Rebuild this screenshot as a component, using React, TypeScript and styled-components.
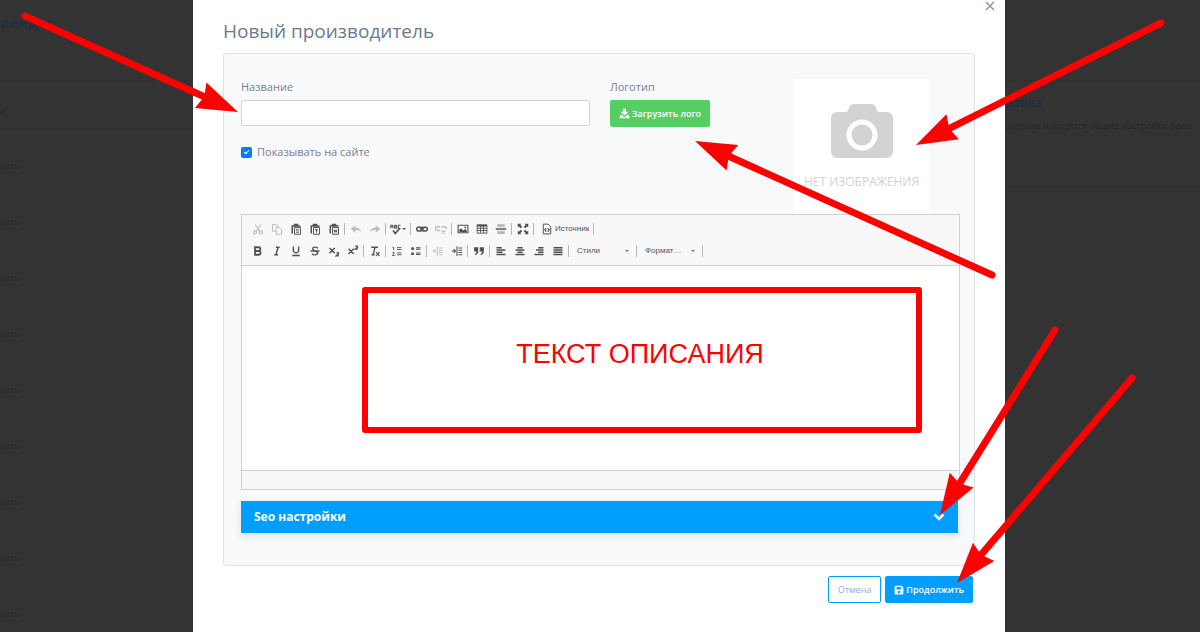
import React from "react";
import styled, { createGlobalStyle, css } from "styled-components";

const Global = createGlobalStyle`
  *, *::before, *::after { box-sizing: border-box; }
  body { margin: 0; background: #333; font-family: "Open Sans", "Noto Sans", sans-serif; font-size: 11px; line-height: 16px; color: #7b7f90; }
  button, input, select { font-family: inherit; margin: 0; }
`;

const Screen = styled.div`
  position: relative;
  display: grid;
  grid-template-columns: minmax(0, 193fr) minmax(0, 812fr) minmax(0, 195fr);
  min-height: 100vh;
  overflow: hidden;
`;

const BackHeading = styled.h2<{ $size: number }>`
  margin: 0;
  font-size: ${(p) => p.$size}px;
  line-height: 20px;
  font-weight: 700;
  color: #202f3c;
`;

const BackList = styled.section`
  padding-top: 12px;
  font-size: 9px;
  color: #272727;
`;

const ListHead = styled.div`
  margin-top: 48px;
  height: 49px;
  padding-top: 24px;
  border-top: 1px solid #303030;
  border-bottom: 1px solid #303030;
  line-height: 14px;
`;

const List = styled.ul`
  margin: 0;
  padding: 0;
  list-style: none;
`;

const ListRow = styled.li`
  height: 56px;
  padding-top: 30px;
  line-height: 14px;
  border-bottom: 1px solid #313131;
`;

const Help = styled.aside`
  align-self: start;
  margin-top: 80px;
  height: 107px;
  padding: 12px 0 0;
  border-top: 1px solid #303030;
  border-bottom: 1px solid #2e2e2e;
  white-space: nowrap;
  p { margin: 6px 0 0; font-size: 9px; line-height: 14px; color: #262626; }
`;

const Dialog = styled.section`
  background: #fff;
  padding: 0 30px 28px;
  display: flex;
  flex-direction: column;
`;

const DialogTop = styled.div`
  display: flex;
  justify-content: flex-end;
  height: 17px;
  margin-right: -20px;
`;

const CloseButton = styled.button`
  display: flex;
  width: 10px;
  height: 11px;
  padding: 1px 0 0;
  border: 0;
  background: none;
  color: #8d98a7;
`;

const Title = styled.h1`
  margin: 0 0 8px;
  font-size: 19px;
  line-height: 28px;
  font-weight: 400;
  color: #6b7a90;
`;

const Panel = styled.div`
  border: 1px solid #dde2e7;
  border-radius: 3px;
  background: #f7f9fb;
  padding: 25px 14px 32px 17px;
`;

const Fields = styled.div`
  display: grid;
  grid-template-columns: minmax(0, 349fr) minmax(0, 164fr) 135px;
  column-gap: 20px;
  padding-right: 31px;
`;

const Label = styled.label`
  display: block;
  line-height: 16px;
  margin-bottom: 5px;
`;

const TextInput = styled.input`
  display: block;
  width: 100%;
  height: 26px;
  padding: 2px 8px;
  border: 1px solid #cfd4da;
  border-radius: 2px;
  background: #fff;
  font-size: 11px;
`;

const CheckLine = styled.label`
  display: flex;
  align-items: center;
  gap: 5px;
  margin-top: 18px;
`;

const Check = styled.input`
  appearance: none;
  width: 11px;
  height: 11px;
  border-radius: 2px;
  background: #007bff;
  display: grid;
  place-items: center;
  &:checked::before {
    content: "";
    width: 5px;
    height: 3px;
    border-left: 1px solid #fff;
    border-bottom: 1px solid #fff;
    transform: translateY(-1px) rotate(-45deg);
  }
`;

const Button = styled.button<{ $kind: "green" | "blue" | "outline" }>`
  display: inline-flex;
  align-items: center;
  justify-content: center;
  gap: 2px;
  height: 27px;
  padding: 0 8px;
  border: 1px solid #009eff;
  border-radius: 2px;
  font-size: 9px;
  font-weight: 600;
  line-height: 14px;
  white-space: nowrap;
  color: #fff;
  background: #009eff;
  ${(p) => p.$kind === "green" && css`background: #55ce63; border-color: #55ce63;`}
  ${(p) => p.$kind === "outline" && css`padding: 0 9px; background: #fff; color: #89aef5; font-weight: 400;`}
`;

const NoImage = styled.figure`
  margin: 0;
  height: 135px;
  background: #fff;
  display: flex;
  flex-direction: column;
  align-items: center;
  padding-top: 25px;
  figcaption { margin-top: 16px; font-size: 12px; line-height: 16px; color: #d3d3d3; white-space: nowrap; }
`;

const Editor = styled.div`
  border: 1px solid #d1d1d1;
  background: #fff;
`;

const Toolbar = styled.div`
  background: #f8f8f8;
  border-bottom: 1px solid #d1d1d1;
  padding: 3px 6px;
`;

const ToolRow = styled.div`
  display: flex;
  align-items: center;
  height: 22px;
`;

const Tool = styled.button<{ $faded?: boolean; $wide?: boolean }>`
  display: flex;
  align-items: center;
  justify-content: center;
  width: ${(p) => (p.$wide ? 22 : 19)}px;
  height: 20px;
  padding: 0;
  border: 0;
  background: none;
  color: #505050;
  opacity: ${(p) => (p.$faded ? 0.35 : 1)};
`;

const SourceTool = styled(Tool)`
  width: auto;
  gap: 2px;
  padding: 0 3px 0 6px;
  font: 8px/12px "Liberation Sans", Arial, sans-serif;
`;

const Divider = styled.span`
  width: 1px;
  height: 12px;
  margin: 0 1px;
  background: #b5b5b5;
`;

const Combo = styled.select<{ $w: number }>`
  appearance: none;
  width: ${(p) => p.$w}px;
  height: 18px;
  padding: 0 0 1px 7px;
  border: 0;
  background: none;
  color: #555;
  font: 8px/12px "Liberation Sans", Arial, sans-serif;
`;

const ComboArrow = styled.span`
  width: 4px;
  height: 2px;
  margin: 0 6px 0 0;
  background: #777;
  clip-path: polygon(0 0, 100% 0, 50% 100%);
`;

const Content = styled.div`
  height: 204px;
  padding: 21px 37px 0 120px;
`;

const Callout = styled.div`
  display: flex;
  align-items: center;
  justify-content: center;
  height: 146px;
  padding: 0 4px 12px 0;
  border: 6px solid #f00;
  border-radius: 3px;
  font: 27px/32px "Liberation Sans", Arial, sans-serif;
  color: #f00;
`;

const EditorFoot = styled.div`
  height: 19px;
  border-top: 1px solid #d1d1d1;
  background: #f8f8f8;
`;

const SeoBar = styled.button`
  display: flex;
  align-items: center;
  justify-content: space-between;
  width: calc(100% - 2px);
  height: 32px;
  margin-top: 11px;
  padding: 0 13px;
  border: 0;
  background: #009eff;
  box-shadow: 0 3px 8px rgba(0, 0, 0, 0.1);
  color: #fff;
  font-size: 12px;
  font-weight: 700;
  line-height: 16px;
`;

const Actions = styled.div`
  display: flex;
  justify-content: flex-end;
  gap: 4px;
  margin-top: 10px;
  padding-right: 2px;
`;

const Markers = styled.svg`
  position: absolute;
  top: 0;
  left: 0;
  width: 100%;
  pointer-events: none;
`;

const icons: Record<string, React.ReactNode> = {
  cut: <g fill="none" stroke="currentColor" strokeWidth="1.5"><path d="M4 2l6.5 9M12 2L5.500 11" /><circle cx="4" cy="12.500" r="2" /><circle cx="12" cy="12.500" r="2" /></g>,
  copy: <g fill="#f8f8f8" stroke="currentColor" strokeWidth="1.3"><path d="M2 2h5l2 2v7H2z" /><path d="M7 6h4l3 3v6H7z" /></g>,
  paste: <g><path d="M2 3h12v2H4v9H2zM5 1h6v2H5z" fill="currentColor" /><path d="M6 6h8v9H6z" fill="none" stroke="currentColor" strokeWidth="1.300" /><path d="M8 8.500h4M8 10.500h4M8 12.500h4" stroke="currentColor" /></g>,
  pasteText: <g><path d="M2 3h12v2H4v9H2zM5 1h6v2H5z" fill="currentColor" /><path d="M6 6h8v9H6z" fill="none" stroke="currentColor" strokeWidth="1.300" /><path d="M8 9h4M10 9v4" stroke="currentColor" strokeWidth="1.300" /></g>,
  pasteWord: <g><path d="M2 3h12v2H4v9H2zM5 1h6v2H5z" fill="currentColor" /><path d="M6 6h8v9H6z" fill="none" stroke="currentColor" strokeWidth="1.300" /><path d="M8 8.500l1 4 1-3 1 3 1-4" fill="none" stroke="currentColor" strokeWidth="1.200" /></g>,
  undo: <path d="M1 8l6-5v3c4 0 7 2 8 6-2-2-4-3-8-2.500V13z" fill="currentColor" />,
  redo: <path d="M15 8L9 3v3c-4 0-7 2-8 6 2-2 4-3 8-2.500V13z" fill="currentColor" />,
  spell: <g fill="none" stroke="currentColor" strokeWidth="1.300"><path d="M1 7V3h3v4M1 5h3M6 3h3v4H6zM6 5h3M14 3h-3v4h3" /><path d="M4 10l3 4 6-7" strokeWidth="2.200" /></g>,
  link: <g fill="none" stroke="currentColor" strokeWidth="2"><rect x="1" y="5.500" width="7" height="5" rx="2" /><rect x="8" y="5.500" width="7" height="5" rx="2" /><path d="M5 8h6" /></g>,
  unlink: <g fill="none" stroke="currentColor" strokeWidth="1.800"><path d="M7 5H3a2 2 0 0 0 0 5h4M9 5h4a2 2 0 0 1 2 3M9 10l5 4M14 10l-5 4" /></g>,
  image: <g><path d="M1.500 3h13v10h-13z" fill="none" stroke="currentColor" strokeWidth="1.500" /><path d="M3 12V9l2.500-2L8 10l3-2 2 2v2z" fill="currentColor" /><circle cx="11" cy="6" r="1.200" fill="currentColor" /></g>,
  table: <g fill="none" stroke="currentColor" strokeWidth="1.200"><path d="M1.500 2.500h13v11h-13zM1.500 7h13M1.500 10h13M6 3v10M10 3v10" /><path d="M1.500 3.500h13" strokeWidth="2.500" /></g>,
  rule: <g fill="currentColor"><path d="M3 1.500h10V5H3zM3 11h10v3.500H3z" opacity=".4" /><path d="M1 6.500h14v3H1z" opacity=".7" /></g>,
  maximize: <path d="M1 1h5L4.500 2.500 7 5 5 7 2.500 4.500 1 6zM15 1v5l-1.500-1.500L11 7 9 5l2.500-2.500L10 1zM1 15v-5l1.500 1.500L5 9l2 2-2.500 2.500L6 15zM15 15h-5l1.500-1.500L9 11l2-2 2.500 2.500L15 10z" fill="currentColor" />,
  source: <g fill="none" stroke="currentColor" strokeWidth="1.300"><path d="M3 1.500h6.500L13 5v9.500H3z" /><path d="M7 7L5 9l2 2.500M9 7l2 2-2 2.500" strokeWidth="1.500" /></g>,
  bold: <path d="M4 3h4.500a2.400 2.400 0 0 1 .5 4.800A2.600 2.600 0 0 1 8.500 13H4zM4 8h5" fill="none" stroke="currentColor" strokeWidth="2.400" />,
  italic: <path d="M6.500 3h5M4.500 13h5M9.500 3l-3 10" fill="none" stroke="currentColor" strokeWidth="1.900" />,
  underline: <path d="M4.500 2v5a3.500 3.500 0 0 0 7 0V2M3 14h10" fill="none" stroke="currentColor" strokeWidth="1.900" />,
  strike: <path d="M12 4.500C11 2.500 5 2 5 5c0 3.500 6.500 2.500 6.500 5.500S5.500 14 4 11.500M2 8h12" fill="none" stroke="currentColor" strokeWidth="1.800" />,
  sub: <path d="M2 4l7 7M9 4l-7 7M11 10.500h3V12l-3 2.500h3.500" fill="none" stroke="currentColor" strokeWidth="1.800" />,
  sup: <path d="M2 5l7 7M9 5l-7 7M11 1.500h3V3l-3 2.500h3.500" fill="none" stroke="currentColor" strokeWidth="1.800" />,
  clear: <path d="M3 3h9M8 3L5.500 13M3.500 13h4M9.500 9.500l4.500 5M14 9.500l-4.500 5" fill="none" stroke="currentColor" strokeWidth="1.700" />,
  ol: <path d="M2 3h1.500v4M2 10h2.500L2 14h3M8 3.500h6M8 6h6M8 10.500h6M8 13h6" fill="none" stroke="currentColor" strokeWidth="1.200" />,
  ul: <g fill="currentColor"><circle cx="3.500" cy="4.500" r="2" /><circle cx="3.500" cy="11.500" r="2" /><path d="M8 3h6v1.200H8zM8 5h6v1.200H8zM8 10h6v1.200H8zM8 12h6v1.200H8z" /></g>,
  outdent: <path d="M7 1.500v13M6 8H1M4 5.500L1.500 8 4 10.500M9 4h5M9 7h5M9 10h5M9 13h5" fill="none" stroke="currentColor" strokeWidth="1.300" />,
  indent: <path d="M8 1.500v13M1 8h5M3.500 5.500L6 8l-2.500 2.500M10 4h5M10 7h5M10 10h5M10 13h5" fill="none" stroke="currentColor" strokeWidth="1.400" />,
  quote: <path d="M1.500 3h5.500v5c0 3-1.500 4.500-4 5.500l-.5-1.500C4 11 4.500 10 4.500 8.500h-3zM9 3h5.500v5c0 3-1.500 4.500-4 5.500l-.5-1.500c1.500-1 2-2 2-3.500H9z" fill="currentColor" />,
  left: <path d="M2 3.500h7M2 6.500h12M2 9.500h8M2 12.500h12" stroke="currentColor" strokeWidth="2" />,
  center: <path d="M4.500 3.500h7M2 6.500h12M4.500 9.500h7M2 12.500h12" stroke="currentColor" strokeWidth="2" />,
  right: <path d="M7 3.500h7M4 6.500h10M7 9.500h7M2 12.500h12" stroke="currentColor" strokeWidth="2" />,
  justify: <path d="M2 3.500h12M2 6.500h12M2 9.500h12M2 12.500h12" stroke="currentColor" strokeWidth="2" />,
};

function Icon({ name }: { name: string }) {
  return <svg width="12" height="12" viewBox="0 0 16 16" aria-hidden="true">{icons[name]}</svg>;
}

const faded = new Set(["cut", "copy", "undo", "redo", "unlink", "outdent"]);

function Tools({ groups }: { groups: string[][] }) {
  return (
    <>
      {groups.map((group, i) => (
        <React.Fragment key={i}>
          {group.map((n) => (
            <Tool key={n} type="button" aria-label={n} $faded={faded.has(n)} $wide={n === "spell"}>
              <Icon name={n} />
              {n === "spell" && <svg width="4" height="3" viewBox="0 0 4 3"><path d="M0 0h4L2 2z" fill="currentColor" /></svg>}
            </Tool>
          ))}
          <Divider />
        </React.Fragment>
      ))}
    </>
  );
}

/* Each arrow runs from its round tail to the tip of its head. */
const arrows = [
  [25, 16, 238, 112],
  [1161, 23, 916, 145],
  [992, 275, 695, 141],
  [1055, 330, 940, 515],
  [1132, 378, 957, 583],
];

function Arrow({ points }: { points: number[] }) {
  const [x1, y1, x2, y2] = points;
  const length = Math.hypot(x2 - x1, y2 - y1);
  const angle = (Math.atan2(y2 - y1, x2 - x1) * 180) / Math.PI;
  return (
    <g transform={`translate(${x1} ${y1}) rotate(${angle})`}>
      <path d={`M0 0H${length - 34}`} stroke="#f00" strokeWidth="7" strokeLinecap="round" />
      <path d={`M${length - 41} -14L${length} 0L${length - 41} 14L${length - 37} 0z`} fill="#f00" />
    </g>
  );
}

export default function App() {
  return (
    <>
      <Global />
      <Screen>
        <BackList>
          <BackHeading $size={15}>ренды</BackHeading>
          <ListHead>е</ListHead>
          <List>
            {Array.from({ length: 9 }, (_, i) => <ListRow key={i}>кать</ListRow>)}
          </List>
        </BackList>

        <Dialog role="dialog" aria-labelledby="dialog-title">
          <DialogTop>
            <CloseButton type="button" aria-label="Закрыть">
              <svg width="10" height="10" viewBox="0 0 10 10"><path d="M1 1l8 8M9 1L1 9" stroke="currentColor" strokeWidth="1.500" /></svg>
            </CloseButton>
          </DialogTop>
          <Title id="dialog-title">Новый производитель</Title>
          <Panel>
            <Fields>
              <div>
                <Label htmlFor="name">Название</Label>
                <TextInput id="name" type="text" />
                <CheckLine>
                  <Check type="checkbox" defaultChecked />
                  Показывать на сайте
                </CheckLine>
              </div>
              <div>
                <Label htmlFor="logo">Логотип</Label>
                <Button id="logo" type="button" $kind="green">
                  <svg width="11" height="11" viewBox="0 0 16 16"><path d="M6 1h4v4.500h4L8 11 2 5.500h4zM3 9.500L1 12v3h14v-3l-2-2.500-5 4z" fill="currentColor" /></svg>
                  Загрузить лого
                </Button>
              </div>
              <NoImage>
                <svg width="62" height="54" viewBox="0 0 62 54">
                  <path d="M7 8h9l3-6q1-2 4-2h17q3 0 4 2l3 6h8q7 0 7 7v32q0 7-7 7H7q-7 0-7-7V15q0-7 7-7z" fill="#d3d3d3" />
                  <circle cx="31" cy="31" r="13" fill="none" stroke="#fff" strokeWidth="5" />
                </svg>
                <figcaption>НЕТ ИЗОБРАЖЕНИЯ</figcaption>
              </NoImage>
            </Fields>

            <Editor>
              <Toolbar>
                <ToolRow>
                  <Tools groups={[["cut", "copy", "paste", "pasteText", "pasteWord"], ["undo", "redo"], ["spell"], ["link", "unlink"], ["image", "table", "rule"], ["maximize"]]} />
                  <SourceTool type="button"><Icon name="source" />Источник</SourceTool>
                  <Divider />
                </ToolRow>
                <ToolRow>
                  <Tools groups={[["bold", "italic", "underline", "strike", "sub", "sup"], ["clear"], ["ol", "ul"], ["outdent", "indent"], ["quote"], ["left", "center", "right", "justify"]]} />
                  <Combo aria-label="Стили" $w={55}><option>Стили</option></Combo>
                  <ComboArrow />
                  <Divider />
                  <Combo aria-label="Форматирование" $w={53}><option>Формат…</option></Combo>
                  <ComboArrow />
                  <Divider />
                </ToolRow>
              </Toolbar>
              <Content>
                <Callout>ТЕКСТ ОПИСАНИЯ</Callout>
              </Content>
              <EditorFoot />
            </Editor>

            <SeoBar type="button">
              Seo настройки
              <svg width="12" height="12" viewBox="0 0 12 12"><path d="M1.500 3.500L6 8l4.500-4.500" fill="none" stroke="currentColor" strokeWidth="2.600" /></svg>
            </SeoBar>
          </Panel>
          <Actions>
            <Button type="button" $kind="outline">Отмена</Button>
            <Button type="button" $kind="blue">
              <svg width="10" height="10" viewBox="0 0 16 16"><path d="M1 3q0-2 2-2h9l3 3v9q0 2-2 2H3q-2 0-2-2zM4 3v4h7V3zM8 9a2.300 2.300 0 1 0 .01 0z" fill="currentColor" fillRule="evenodd" /></svg>
              Продолжить
            </Button>
          </Actions>
        </Dialog>

        <Help>
          <BackHeading $size={12}>равка</BackHeading>
          <p>разделе находятся общие настройки брен</p>
        </Help>

        <Markers viewBox="0 0 1200 632" aria-hidden="true">
          {arrows.map((points, i) => <Arrow key={i} points={points} />)}
        </Markers>
      </Screen>
    </>
  );
}
